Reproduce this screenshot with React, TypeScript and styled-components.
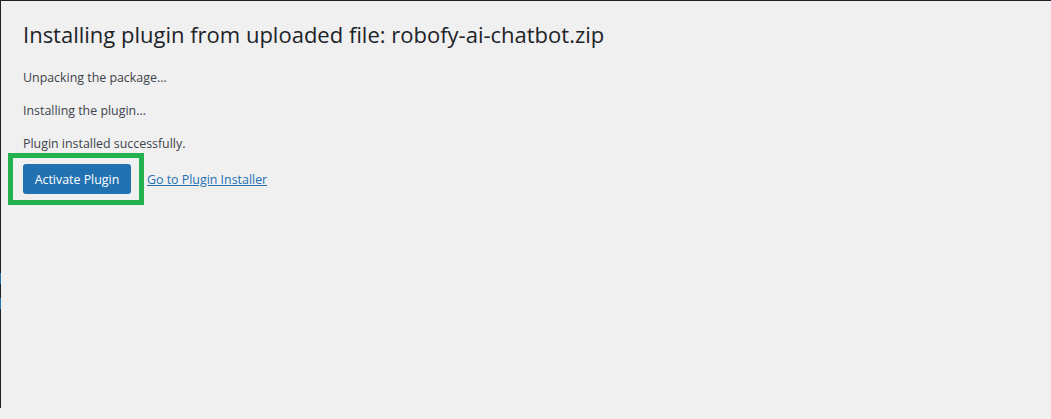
import styled, { createGlobalStyle } from 'styled-components';

const GlobalStyle = createGlobalStyle`
  html, body {
    margin: 0;
    padding: 0;
    background: #f0f0f1;
  }
  body {
    font-family: "Open Sans", "Noto Sans", "Liberation Sans", sans-serif;
    color: #3c434a;
  }
`;

const Frame = styled.div`
  display: flex;
  flex-direction: column;
  width: 100%;
  height: 100vh;
  overflow: hidden;
`;

const AdminBarEdge = styled.div`
  height: 1px;
  flex-shrink: 0;
  background: #1d2327;
`;

const Body = styled.div`
  display: flex;
  flex: 1;
`;

const MenuEdge = styled.div`
  width: 1px;
  flex-shrink: 0;
  display: flex;
  flex-direction: column;
  background: #1d2327;
  height: 407px;
  padding-top: 272px;
  box-sizing: border-box;
  gap: 14px;
`;

const MenuMark = styled.span`
  display: block;
  height: 11px;
  background: #2271b1;
`;

const Wrap = styled.main`
  flex: 1;
  padding: 18px 0 0 22px;
`;

const Title = styled.h1`
  margin: 0 0 19px;
  font-size: 22px;
  font-weight: 400;
  line-height: 30px;
  color: #1d2327;
`;

const Step = styled.p`
  margin: 0 0 13px;
  font-size: 12.4px;
  line-height: 20px;
`;

const Actions = styled.div`
  display: flex;
  align-items: center;
  gap: 16px;
  margin-top: -14px;
  margin-left: -15px;
`;

const Highlight = styled.div`
  border: 5px solid #22b14c;
  padding: 6px 8px 6px 10px;
`;

const PrimaryButton = styled.a`
  display: inline-flex;
  align-items: center;
  justify-content: center;
  width: 108px;
  height: 30px;
  border-radius: 3px;
  background: #2271b1;
  color: #fff;
  font-size: 12.4px;
  text-decoration: none;
`;

const TextLink = styled.a`
  color: #2271b1;
  font-size: 12.4px;
  text-decoration: underline;
  margin-left: -13px;
`;

const App = () => (
  <>
    <GlobalStyle />
    <Frame>
      <AdminBarEdge />
      <Body>
        <MenuEdge>
          <MenuMark />
          <MenuMark />
        </MenuEdge>
        <Wrap>
          <Title>Installing plugin from uploaded file: robofy-ai-chatbot.zip</Title>
          <Step>Unpacking the package…</Step>
          <Step>Installing the plugin…</Step>
          <Step>Plugin installed successfully.</Step>
          <Actions>
            <Highlight>
              <PrimaryButton href="#">Activate Plugin</PrimaryButton>
            </Highlight>
            <TextLink href="#">Go to Plugin Installer</TextLink>
          </Actions>
        </Wrap>
      </Body>
    </Frame>
  </>
);

export default App;
